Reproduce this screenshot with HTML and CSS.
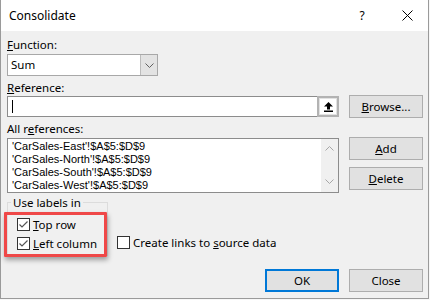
FILE: index.html
```html
<!DOCTYPE html>
<html lang="en">
<head>
  <meta charset="UTF-8" />
  <title>Consolidate</title>
  <link rel="stylesheet" href="styles.css">
</head>
<body>

<div class="dialog">
  <div class="titlebar">
    <span class="title">Consolidate</span>
    <span class="help">?</span>
    <span class="close-x">
      <svg width="11" height="11" viewBox="0 0 11 11"><path d="M0.5 0.5L10.5 10.5M10.5 0.5L0.5 10.5" stroke="#000" stroke-width="1" fill="none"/></svg>
    </span>
  </div>

  <div class="content">
    <label class="field-label"><u>F</u>unction:</label>
    <div class="combo">
      <span class="combo-text">Sum</span>
      <span class="combo-btn">
        <svg width="9" height="5" viewBox="0 0 9 5"><path d="M0.5 0.5L4.5 4.5L8.5 0.5" stroke="#606060" fill="none"/></svg>
      </span>
    </div>

    <label class="field-label ref-label"><u>R</u>eference:</label>
    <div class="row">
      <div class="ref-box">
        <div class="ref-input"><span class="caret"></span></div>
        <div class="collapse-btn">
          <svg width="9" height="10" viewBox="0 0 9 10"><path d="M4.5 0L9 4.5H6V7.5H3V4.5H0Z" fill="#000"/><rect x="0" y="8.5" width="9" height="1.5" fill="#000"/></svg>
        </div>
      </div>
      <button class="btn"><u>B</u>rowse...</button>
    </div>

    <label class="field-label all-label">All r<u>e</u>ferences:</label>
    <div class="row list-row">
      <div class="list">
        <div class="list-items">
          <div>'CarSales-East'!$A$5:$D$9</div>
          <div>'CarSales-North'!$A$5:$D$9</div>
          <div>'CarSales-South'!$A$5:$D$9</div>
          <div>'CarSales-West'!$A$5:$D$9</div>
        </div>
        <div class="scrollbar">
          <svg width="9" height="5" viewBox="0 0 9 5"><path d="M0.5 4.5L4.5 0.5L8.5 4.5" stroke="#a6a6a6" fill="none"/></svg>
          <svg width="9" height="5" viewBox="0 0 9 5"><path d="M0.5 0.5L4.5 4.5L8.5 0.5" stroke="#a6a6a6" fill="none"/></svg>
        </div>
      </div>
      <div class="side-btns">
        <button class="btn"><u>A</u>dd</button>
        <button class="btn"><u>D</u>elete</button>
      </div>
    </div>

    <div class="options">
      <fieldset class="group">
        <legend>Use labels in</legend>
        <label class="check">
          <span class="box"><svg width="11" height="11" viewBox="0 0 11 11"><path d="M1.5 5.5L4 8L9.5 2.5" stroke="#555" stroke-width="1.2" fill="none"/></svg></span>
          <span><u>T</u>op row</span>
        </label>
        <label class="check">
          <span class="box"><svg width="11" height="11" viewBox="0 0 11 11"><path d="M1.5 5.5L4 8L9.5 2.5" stroke="#555" stroke-width="1.2" fill="none"/></svg></span>
          <span><u>L</u>eft column</span>
        </label>
      </fieldset>
      <label class="check create-links">
        <span class="box"></span>
        <span>Create links to <u>s</u>ource data</span>
      </label>
    </div>

    <div class="footer">
      <button class="btn default">OK</button>
      <button class="btn">Close</button>
    </div>
  </div>

  <!-- annotation box over the label checkboxes -->
  <div class="highlight"></div>
</div>

</body>
</html>
```

FILE: styles.css
```css
/* Page */
body {
  margin: 0;
  background: #f7f7f7;
  font-family: "Noto Sans", "Segoe UI", sans-serif;
  font-size: 11.5px;
  color: #000;
}

u {
  text-underline-offset: 1px;
}

/* Window */
.dialog {
  position: relative;
  width: 427px;
  height: 298px;
  border: 1px solid #9a9a9a;
  border-top: none;
  background: #f0f0f0;
  display: flex;
  flex-direction: column;
}

.titlebar {
  height: 31px;
  background: #fff;
  display: flex;
  align-items: center;
  padding: 0 11px 0 8px;
  font-size: 12px;
}

.title {
  flex: 1;
}

.help,
.close-x {
  width: 20px;
  display: flex;
  justify-content: center;
}

.help {
  margin-right: 25px;
}

/* Body */
.content {
  flex: 1;
  display: flex;
  flex-direction: column;
  padding: 6px 5px 0 6px;
}

.field-label {
  display: block;
  line-height: 15px;
  height: 15px;
}

.ref-label {
  margin-top: 4px;
}

.all-label {
  margin-top: 3px;
}

.row {
  display: flex;
  align-items: flex-start;
}

/* Function combo */
.combo {
  margin-top: 2px;
  width: 151px;
  height: 22px;
  box-sizing: border-box;
  border: 1px solid #a8a8a8;
  background: #fff;
  display: flex;
}

.combo-text {
  flex: 1;
  padding-left: 3px;
  line-height: 20px;
}

.combo-btn {
  width: 16px;
  background: #e3e3e3;
  border-left: 1px solid #bcbcbc;
  display: flex;
  align-items: center;
  justify-content: center;
}

/* Reference input */
.ref-box {
  width: 332px;
  height: 21px;
  margin-top: 1px;
  display: flex;
}

.ref-input {
  flex: 1;
  box-sizing: border-box;
  border: 1px solid #8c8c8c;
  border-right: none;
  background: #fff;
  padding: 3px 0 0 4px;
}

.caret {
  display: block;
  width: 1px;
  height: 13px;
  background: #000;
}

.collapse-btn {
  width: 22px;
  box-sizing: border-box;
  border: 2px solid #b3b3b3;
  box-shadow: inset 0 0 0 1px #e2e2e2;
  background: #fff;
  display: flex;
  align-items: center;
  justify-content: center;
}

/* Buttons */
.btn {
  width: 74px;
  height: 23px;
  box-sizing: border-box;
  border: 1px solid #adadad;
  background: #e1e1e1;
  font: inherit;
  color: #000;
  padding: 0;
  margin: 0;
}

.row > .btn {
  margin-left: auto;
}

.btn.default {
  border: 2px solid #0078d7;
}

/* References list */
.list-row {
  margin-top: 1px;
}

.list {
  width: 332px;
  height: 55px;
  margin-top: 1px;
  box-sizing: border-box;
  border: 1px solid #8c8c8c;
  background: #fff;
  display: flex;
}

.list-items {
  flex: 1;
  padding: 1px 0 0 4px;
  font-family: "Liberation Sans", Arial, sans-serif;
  font-size: 11px;
  line-height: 13px;
}

.scrollbar {
  width: 17px;
  background: #f0f0f0;
  display: flex;
  flex-direction: column;
  justify-content: space-between;
  align-items: center;
  padding: 7px 0 8px;
}

.side-btns {
  margin-left: auto;
  display: flex;
  flex-direction: column;
  gap: 7px;
}

/* Use labels in */
.options {
  margin-top: 2px;
  display: flex;
  align-items: flex-end;
}

.group {
  margin: 0;
  width: 101px;
  box-sizing: border-box;
  min-width: 0;
  border: 1px solid #dcdcdc;
  padding: 5px 0 2px 9px;
}

.group legend {
  margin-left: -6px;
  padding: 0 2px;
  line-height: 15px;
}

.check {
  display: flex;
  align-items: center;
  gap: 3px;
  height: 19px;
  white-space: nowrap;
}

.box {
  width: 13px;
  height: 13px;
  box-sizing: border-box;
  border: 1px solid #333;
  background: #fff;
  display: flex;
  align-items: center;
  justify-content: center;
}

.create-links {
  margin: 0 0 4px 9px;
}

/* Footer */
.footer {
  margin-top: 13px;
  display: flex;
  justify-content: flex-end;
  gap: 10px;
}

/* Red annotation box */
.highlight {
  position: absolute;
  left: 3px;
  top: 212px;
  width: 103px;
  height: 45px;
  box-sizing: border-box;
  border: 3px solid #ef4848;
  border-radius: 1px;
  box-shadow: 1px 3px 5px rgba(0, 0, 0, 0.35);
}
```
